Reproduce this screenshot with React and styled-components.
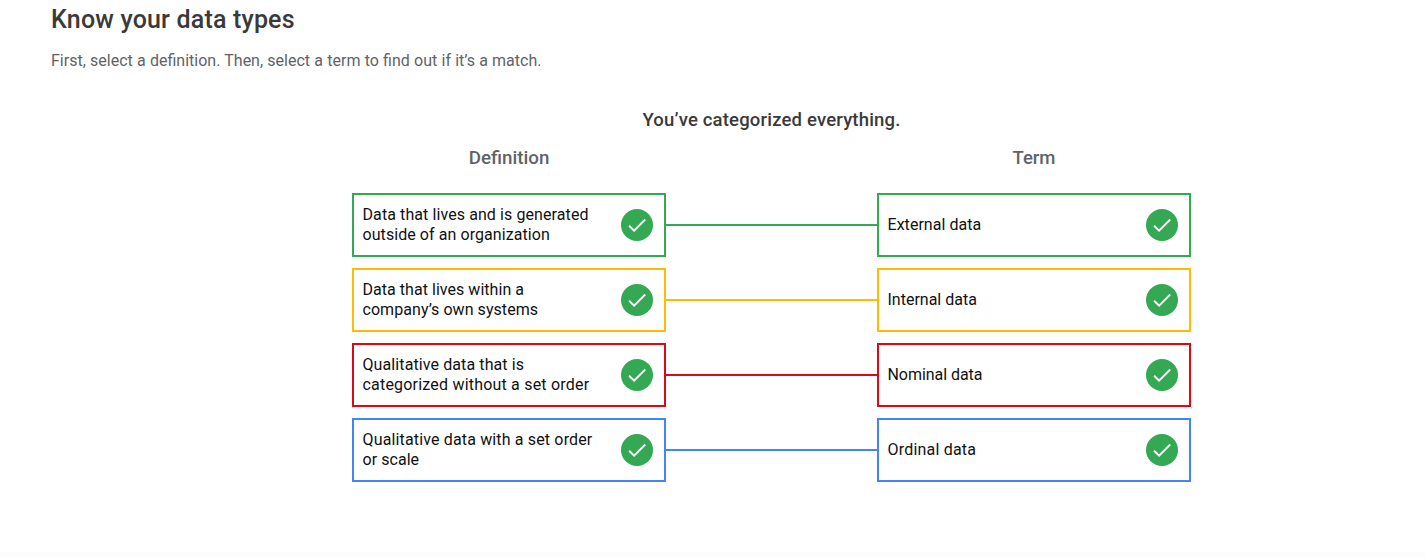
import React from "react";
import styled, { createGlobalStyle } from "styled-components";

const GlobalStyle = createGlobalStyle`
  * { box-sizing: border-box; }
  body { margin: 0; background: #fff; font-family: Roboto, "Open Sans", sans-serif; }
`;

const Page = styled.main`
  display: flex;
  flex-direction: column;
  height: 558px;
  overflow: hidden;
  padding: 4px 0 0;
`;

const Title = styled.h1`
  margin: 0 0 0 51px;
  font-size: 25px;
  line-height: 32px;
  font-weight: 500;
  letter-spacing: 0.18px;
  color: #3a3a3a;
`;

const Intro = styled.p`
  margin: 13px 0 0 51px;
  font-size: 16px;
  line-height: 24px;
  word-spacing: 0.27px;
  color: #5f6368;
`;

const Activity = styled.section`
  width: 839px;
  margin: 35px 0 0 352px;
`;

const Status = styled.h2`
  margin: 0;
  font-size: 18.5px;
  line-height: 24px;
  font-weight: 500;
  letter-spacing: 0.18px;
  text-align: center;
  color: #3a3a3a;
`;

const Headings = styled.div`
  display: flex;
  justify-content: space-between;
  margin: 14px 0 23px;
`;

const Heading = styled.h3`
  width: 314px;
  margin: 0;
  font-size: ${(p) => p.$size || 18.5}px;
  line-height: 24px;
  font-weight: 500;
  text-align: center;
  color: #5f6368;
`;

const Pairs = styled.div`
  display: grid;
  row-gap: 11px;
`;

const Pair = styled.div`
  display: flex;
  align-items: center;
  color: ${(p) => p.$color};
`;

const Card = styled.div`
  display: flex;
  align-items: center;
  justify-content: space-between;
  width: 314px;
  height: 64px;
  padding: 0 11px 0 8.5px;
  border: 2px solid currentColor;
`;

const Label = styled.div`
  font-size: 16px;
  line-height: 20px;
  color: #111;
`;

const Line = styled.span`
  display: block;
  width: max-content;
  white-space: nowrap;
  letter-spacing: ${(p) => p.$track || 0}px;
`;

const Connector = styled.div`
  flex: 1;
  height: 2px;
  background: currentColor;
`;

const Badge = styled.svg`
  flex: none;
  width: 32px;
  height: 32px;
`;

const Footer = styled.footer`
  height: 6px;
  margin-top: auto;
  background: #fcfcfc;
`;

const pairs = [
  {
    color: "#34a853",
    definition: [["Data that lives and is generated", 0.09], ["outside of an organization", 0.07]],
    term: ["External data", 0.04],
  },
  {
    color: "#fbbc04",
    definition: [["Data that lives within a", 0.04], ["company’s own systems", 0.06]],
    term: ["Internal data", 0],
  },
  {
    color: "#d50b1a",
    definition: [["Qualitative data that is", 0.1], ["categorized without a set order", 0.2]],
    term: ["Nominal data", -0.05],
  },
  {
    color: "#4285f4",
    definition: [["Qualitative data with a set order", 0.15], ["or scale", 0.05]],
    term: ["Ordinal data", 0.2],
  },
];

function Check() {
  return (
    <Badge viewBox="0 0 32 32" aria-hidden="true">
      <circle cx="16" cy="16" r="16" fill="#34a853" />
      <path d="M8.1 16.7L13.1 21.6L24.2 10.5" fill="none" stroke="#fff" strokeWidth="1.9" />
    </Badge>
  );
}

function Choice({ lines }) {
  return (
    <Card>
      <Label>
        {lines.map(([text, track]) => (
          <Line key={text} $track={track}>{text}</Line>
        ))}
      </Label>
      <Check />
    </Card>
  );
}

export default function App() {
  return (
    <>
      <GlobalStyle />
      <Page>
        <Title>Know your data types</Title>
        <Intro>First, select a definition. Then, select a term to find out if it’s a match.</Intro>
        <Activity>
          <Status>You’ve categorized everything.</Status>
          <Headings>
            <Heading $size={18.8}>Definition</Heading>
            <Heading $size={18.5}>Term</Heading>
          </Headings>
          <Pairs>
            {pairs.map((pair) => (
              <Pair key={pair.color} $color={pair.color}>
                <Choice lines={pair.definition} />
                <Connector />
                <Choice lines={[pair.term]} />
              </Pair>
            ))}
          </Pairs>
        </Activity>
        <Footer />
      </Page>
    </>
  );
}
